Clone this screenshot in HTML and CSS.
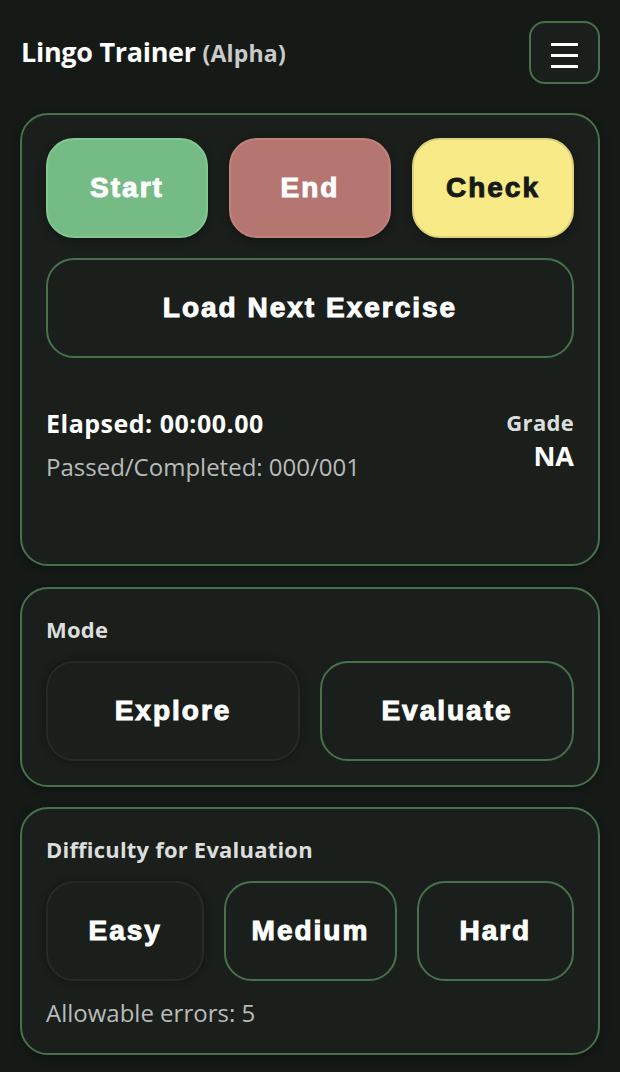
FILE: index.html
```html
<!DOCTYPE html>
<html lang="en">
<head>
    <meta charset="UTF-8">
    <meta name="viewport" content="width=device-width, initial-scale=1.0">
    <title>Lingo Trainer</title>
    <link rel="stylesheet" href="styles.css">
</head>
<body>

    <header class="topbar">
        <h1 class="app-title">Lingo Trainer <span class="tag">(Alpha)</span></h1>
        <button class="menu-btn" aria-label="Menu">
            <span></span><span></span><span></span>
        </button>
    </header>

    <section class="panel panel-main">
        <div class="row-3">
            <button class="btn btn-start">Start</button>
            <button class="btn btn-end">End</button>
            <button class="btn btn-check">Check</button>
        </div>
        <button class="btn btn-outline btn-wide">Load Next Exercise</button>

        <div class="stats">
            <div class="stats-left">
                <div class="elapsed">Elapsed: 00:00.00</div>
                <div class="muted passed">Passed/Completed: 000/001</div>
            </div>
            <div class="stats-right">
                <div class="grade-label">Grade</div>
                <div class="grade-value">NA</div>
            </div>
        </div>
    </section>

    <section class="panel">
        <div class="panel-label">Mode</div>
        <div class="row-2">
            <button class="btn btn-outline selected">Explore</button>
            <button class="btn btn-outline">Evaluate</button>
        </div>
    </section>

    <section class="panel">
        <div class="panel-label">Difficulty for Evaluation</div>
        <div class="row-diff">
            <button class="btn btn-outline selected">Easy</button>
            <button class="btn btn-outline">Medium</button>
            <button class="btn btn-outline">Hard</button>
        </div>
        <div class="muted errors">Allowable errors: 5</div>
    </section>

</body>
</html>
```

FILE: styles.css
```css
/* Tema escuro com bordas verdes */
body {
    font-family: "Open Sans", "Noto Sans", sans-serif;
    background-color: #161a17;
    color: #fff;
    margin: 0;
    padding: 20px 20px 18px;
}
.topbar {
    display: flex;
    justify-content: space-between;
    align-items: center;
    margin-bottom: 29px;
}
.app-title {
    margin: 0 0 0 1px;
    font-size: 27px;
    line-height: 34px;
    font-weight: 700;
    letter-spacing: -0.3px;
}
.tag {
    font-size: 23px;
    color: #c9cbc9;
    letter-spacing: 0.2px;
}
.menu-btn {
    width: 71px;
    height: 63px;
    background: #1a1f1c;
    border: 2px solid #46714b;
    border-radius: 16px;
    display: flex;
    flex-direction: column;
    justify-content: center;
    align-items: center;
    gap: 8px;
    padding: 5px 0 0;
    margin-top: 1px;
}
.menu-btn span {
    display: block;
    width: 27px;
    height: 3px;
    background: #fff;
}
.panel {
    background-color: #1a1f1c;
    border: 2px solid #46714b;
    border-radius: 28px;
    padding: 26px 24px 24px;
    margin-bottom: 20px;
    box-shadow: 0 2px 10px rgba(0,0,0,0.35);
}
.panel-main {
    padding-top: 23px;
    padding-bottom: 23px;
    margin-bottom: 21px;
    min-height: 403px;
}
.btn {
    font-family: "Liberation Sans", Arial, sans-serif;
    font-weight: 700;
    font-size: 28px;
    letter-spacing: 2px;
    -webkit-text-stroke: 1px currentColor;
    color: #fff;
    height: 100px;
    border-radius: 28px;
    border: 2px solid transparent;
    cursor: pointer;
    padding: 0;
}
.row-3 {
    display: grid;
    grid-template-columns: 1fr 1fr 1fr;
    gap: 21px;
    margin-bottom: 20px;
}
.btn-start {
    background-color: #74bb85;
    border-color: #82c793;
    box-shadow: 0 3px 8px rgba(0,0,0,0.35);
}
.btn-end {
    background-color: #b57570;
    border-color: #c1827c;
    box-shadow: 0 3px 8px rgba(0,0,0,0.35);
}
.btn-check {
    background-color: #f8ea87;
    border-color: #ddd07a;
    color: #161a17;
    box-shadow: 0 3px 8px rgba(0,0,0,0.35);
}
.btn-outline {
    background-color: #1a1f1c;
    border-color: #46714b;
}
.btn-outline.selected {
    border-color: #232b25;
    box-shadow: 0 0 6px 2px rgba(0,0,0,0.25);
}
.btn-wide {
    width: 100%;
}
.stats {
    display: flex;
    justify-content: space-between;
    margin-top: 50px;
}
.elapsed {
    font-size: 25px;
    line-height: 30px;
    font-weight: 700;
    letter-spacing: 0.5px;
}
.muted {
    font-size: 24px;
    line-height: 30px;
    color: #b9bbb9;
}
.passed {
    margin-top: 14px;
}
.stats-right {
    text-align: right;
}
.grade-label {
    font-size: 22px;
    line-height: 28px;
    font-weight: 700;
    color: #dcdedc;
    letter-spacing: 0.3px;
}
.grade-value {
    font-size: 27px;
    line-height: 32px;
    font-weight: 700;
    margin-top: 4px;
}
.panel-label {
    font-size: 22px;
    line-height: 28px;
    font-weight: 700;
    color: #dcdedc;
    letter-spacing: 0.2px;
    margin-bottom: 18px;
}
.row-2 {
    display: grid;
    grid-template-columns: 1fr 1fr;
    gap: 20px;
}
.row-diff {
    display: grid;
    grid-template-columns: 159fr 173fr 158fr;
    gap: 20px;
}
.errors {
    margin-top: 17px;
    margin-bottom: 1px;
}
```
